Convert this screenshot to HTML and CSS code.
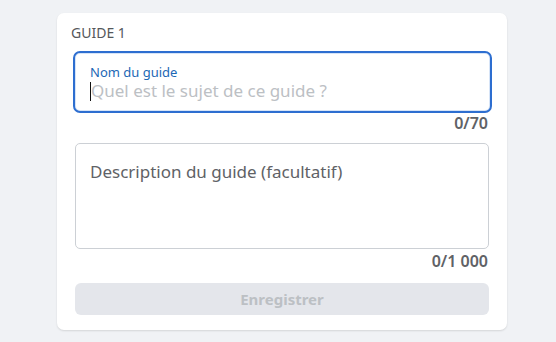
FILE: index.html
```html
<!DOCTYPE html>
<html lang="fr">
<head>
<meta charset="utf-8">
<title>Guide</title>
<link rel="stylesheet" href="styles.css">
</head>
<body>
<div class="card">
  <div class="title">GUIDE 1</div>
  <div class="field focused">
    <div class="label">Nom du guide</div>
    <div class="input-line"><span class="caret"></span><span class="placeholder">Quel est le sujet de ce guide ?</span></div>
  </div>
  <div class="counter">0/70</div>
  <div class="textarea">
    <span class="placeholder-dark">Description du guide (facultatif)</span>
  </div>
  <div class="counter">0/1 000</div>
  <button class="save" disabled>Enregistrer</button>
</div>
</body>
</html>
```

FILE: styles.css
```css
html, body {
  margin: 0;
  padding: 0;
  background: #f0f2f5;
  font-family: "Noto Sans", "Open Sans", sans-serif;
}
body {
  width: 556px;
  height: 342px;
  overflow: hidden;
}
.card {
  box-sizing: border-box;
  margin: 13px 0 0 57px;
  width: 450px;
  height: 317px;
  background: #ffffff;
  border-radius: 7px;
  box-shadow: 0 1px 2px rgba(0, 0, 0, 0.12);
  padding: 10px 18px 15px 18px;
  display: flex;
  flex-direction: column;
}
.title {
  margin-left: -4px;
  font-size: 14px;
  line-height: 20px;
  color: #55575b;
  height: 28px;
}
.field {
  box-sizing: border-box;
  margin: 0 -3px 0 -2px;
  height: 62px;
  border: 2px solid #2d6ed0;
  border-radius: 7px;
  padding: 12px 15px 0 15px;
  box-shadow: inset 0 0 0 1px #d6e4f7;
}
.label {
  font-size: 13px;
  line-height: 14px;
  color: #1c68b5;
}
.input-line {
  display: flex;
  align-items: center;
  height: 22px;
  margin-top: 1px;
}
.caret {
  width: 1px;
  height: 19px;
  background: #111;
}
.placeholder {
  font-size: 17px;
  line-height: 20px;
  color: #bcc0c4;
}
.counter {
  text-align: right;
  font-size: 16px;
  line-height: 20px;
  font-weight: 600;
  color: #606266;
  height: 30px;
  margin-right: 1px;
}
.textarea {
  box-sizing: border-box;
  height: 106px;
  border: 1px solid #ccd0d5;
  border-radius: 5px;
  padding: 16px 14px;
}
.placeholder-dark {
  font-size: 17px;
  line-height: 24px;
  color: #606266;
}
.textarea + .counter {
  padding-top: 2px;
  height: 32px;
}
.save {
  height: 32px;
  border: none;
  border-radius: 6px;
  background: #e4e6eb;
  color: #bcc0c4;
  font-family: inherit;
  font-weight: 700;
  font-size: 15px;
}
```
